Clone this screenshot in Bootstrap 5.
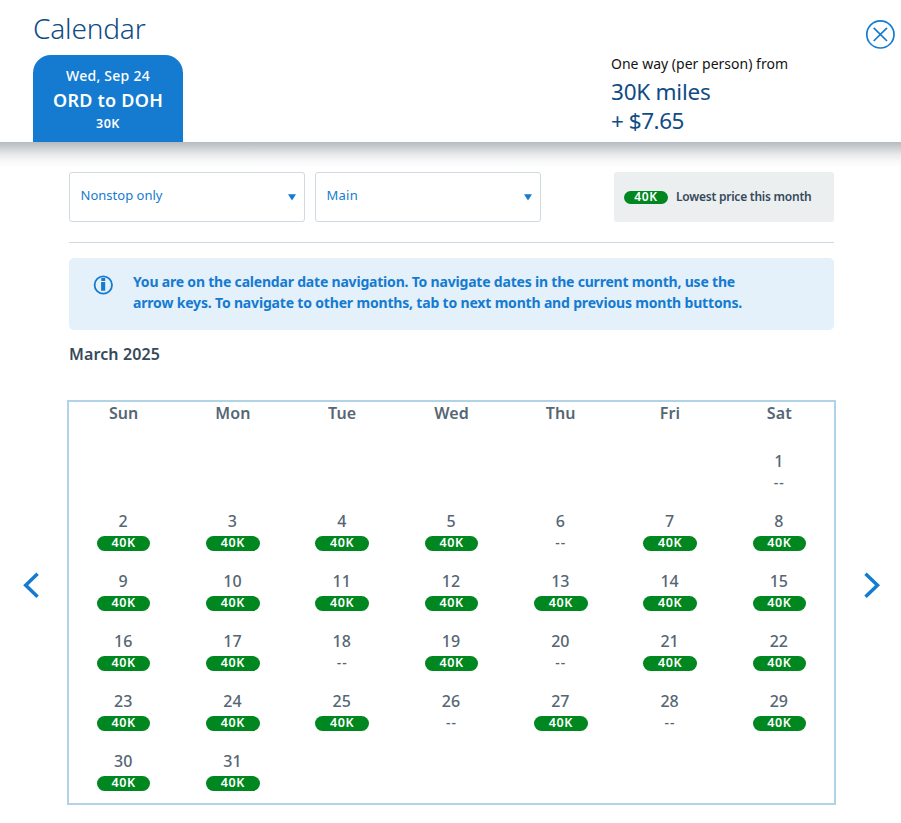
<!DOCTYPE html>
<html lang="en">
<head>
<meta charset="utf-8">
<meta name="viewport" content="width=device-width, initial-scale=1">
<title>Calendar</title>
<link href="https://cdn.jsdelivr.net/npm/bootstrap@5.3.0/dist/css/bootstrap.min.css" rel="stylesheet">
<style>
:root{--aa-blue:#147bd1;--aa-navy:#0f4c85;--aa-text:#36495a;--aa-slate:#566673}
body{font-family:"Noto Sans","Open Sans",sans-serif;color:var(--aa-text);height:823px;overflow:hidden}
.fit{white-space:nowrap}
.page-head{height:142px;padding-left:33px}
.page-title{font-size:28px;font-weight:300;line-height:36px;color:var(--aa-navy);margin:10px 0 9px}
.trip-tab{width:150px;height:87px;background:var(--aa-blue);border-radius:18px 18px 0 0;padding-top:10px;font-weight:500}
.trip-date{font-size:14px;line-height:22px}
.trip-route{font-size:18px;line-height:27px;font-weight:600}
.trip-miles{font-size:12.5px;line-height:19px;font-weight:600}
.fare{width:254px;padding-top:54px}
.fare-label{font-size:14px;line-height:20px;color:#131313;margin-bottom:3px}
.fare-value{font-size:22.5px;line-height:29px;color:var(--aa-navy)}
.close-btn{width:36px;padding-top:19px;line-height:0}
.head-shadow{height:30px;background:linear-gradient(#b4babe,#cdd1d3 20%,#e8eaeb 42%,#f9f9fa 66%,#fff 85%)}
.main-col{width:765px;margin-left:69px}
.filter{height:50px;border:1px solid #d0dae0;border-radius:3px;padding:0 8px 3px 10.5px;color:var(--aa-blue);font-size:13px}
.filter svg{margin-top:3px}
.filter-stops{width:236px}
.filter-cabin{width:226px;margin-left:10px}
.legend{width:220px;height:50px;background:#ebeff0;border-radius:3px;padding-left:10px;font-size:12px;font-weight:600}
.price-pill{width:53.5px;height:15px;border-radius:8px;background:#008720;color:#fff;font-size:12.5px;line-height:14px;font-weight:600;letter-spacing:.6px;text-align:center}
.legend .price-pill{width:44px;height:13px;line-height:12px;margin-right:8px;margin-top:1px;font-size:12px}
.rule{border-top:1px solid #d0dae0;margin-top:20px}
.notice{height:72px;margin-top:15px;background:#e4f0fa;border-radius:5px;padding:13px 0 0 24px;color:var(--aa-blue);font-size:14px;line-height:21px;font-weight:700}
.notice svg{margin:4px 20px 0 0}
.month-name{font-size:16px;line-height:24px;font-weight:600;margin:12px 0 34px}
.month-grid{width:769px;height:405px;border:2px solid #b0d3e7;margin-left:67px;display:grid;grid-template-columns:repeat(7,1fr);grid-template-rows:41px repeat(6,60px);color:var(--aa-slate);text-align:center;font-weight:600}
.week-day{font-size:16px;line-height:22px;letter-spacing:.1px}
.day-num{font-size:16px;line-height:20px;padding:8px 1px 0 0;height:33px;font-weight:500}
.no-fare{font-size:14px;line-height:14px;letter-spacing:1px;font-weight:500}
.arrow-col{position:absolute;top:572px;line-height:0}
.arrow-prev{left:23px}.arrow-next{left:864px}
</style>
<script src="https://cdn.jsdelivr.net/npm/bootstrap@5.3.0/dist/js/bootstrap.bundle.min.js"></script>
</head>
<body class="bg-white position-relative">
<header class="page-head d-flex">
  <div>
    <h1 class="page-title"><span class="fit" data-w="112.5">Calendar</span></h1>
    <div class="trip-tab text-white text-center">
      <div class="trip-date"><span class="fit" data-w="84">Wed, Sep 24</span></div>
      <div class="trip-route"><span class="fit" data-w="110">ORD to DOH</span></div>
      <div class="trip-miles"><span class="fit" data-w="24">30K</span></div>
    </div>
  </div>
  <div class="fare ms-auto">
    <div class="fare-label"><span class="fit" data-w="177">One way (per person) from</span></div>
    <div class="fare-value"><span class="fit" data-w="99.5">30K miles</span></div>
    <div class="fare-value"><span class="fit" data-w="73">+ $7.65</span></div>
  </div>
  <div class="close-btn"><svg width="30" height="30" fill="none" stroke="#147bd1" role="img" aria-label="Close"><circle cx="15.4" cy="15.4" r="13.6" stroke-width="1.7"/><path d="M8.7 8.9 22 22M22 8.9 8.7 22" stroke-width="1.7"/></svg></div>
</header>
<div class="head-shadow"></div>
<main>
  <div class="main-col">
    <div class="d-flex">
      <div class="filter filter-stops d-flex align-items-center justify-content-between"><span class="fit" data-w="82">Nonstop only</span><svg width="8" height="7"><path d="M0 .3h8L4 6.5z" fill="#147bd1"/></svg></div>
      <div class="filter filter-cabin d-flex align-items-center justify-content-between"><span class="fit" data-w="31.5">Main</span><svg width="8" height="7"><path d="M0 .3h8L4 6.5z" fill="#147bd1"/></svg></div>
      <div class="legend ms-auto d-flex align-items-center"><span class="price-pill">40K</span><span class="fit" data-w="135.5">Lowest price this month</span></div>
    </div>
    <div class="rule"></div>
    <div class="notice d-flex align-items-start">
      <svg width="20" height="20" class="flex-shrink-0"><circle cx="10.3" cy="10" r="8.7" fill="none" stroke="#147bd1" stroke-width="1.8"/><path d="M8.3 3.1h3.9v2.9H8.3zM8.1 7h4.1v8.8H8.1z" fill="#147bd1"/></svg>
      <div><span class="fit" data-w="602">You are on the calendar date navigation. To navigate dates in the current month, use the</span><br><span class="fit" data-w="609">arrow keys. To navigate to other months, tab to next month and previous month buttons.</span></div>
    </div>
    <h2 class="month-name"><span class="fit" data-w="91">March 2025</span></h2>
  </div>
  <div class="month-grid" id="monthGrid"></div>
</main>
<div class="arrow-col arrow-prev"><svg width="16" height="26" fill="none" stroke="#147bd1" stroke-width="3.5"><path d="M14.6 1.8 2.7 13.2l11.9 11.5"/></svg></div>
<div class="arrow-col arrow-next"><svg width="17" height="26" fill="none" stroke="#147bd1" stroke-width="3.5"><path d="M1.5 1.8 13.5 13.2 1.5 24.7"/></svg></div>
<script>
const grid = document.getElementById('monthGrid');
const unavailable = [1, 6, 18, 20, 26, 28];
let cells = ['Sun','Mon','Tue','Wed','Thu','Fri','Sat'].map(d => `<div class="week-day">${d}</div>`).join('');
cells += '<div></div>'.repeat(6);
for (let d = 1; d <= 31; d++) {
  cells += `<div><div class="day-num">${d}</div>` +
    (unavailable.includes(d) ? '<div class="no-fare">--</div>' : '<div class="price-pill mx-auto">40K</div>') + '</div>';
}
grid.innerHTML = cells;
// Track each label evenly so that it fills its intended width.
document.querySelectorAll('.fit').forEach(el => {
  const gap = (el.dataset.w - el.getBoundingClientRect().width) / el.textContent.length;
  el.style.letterSpacing = gap + 'px';
});
</script>
</body>
</html>
